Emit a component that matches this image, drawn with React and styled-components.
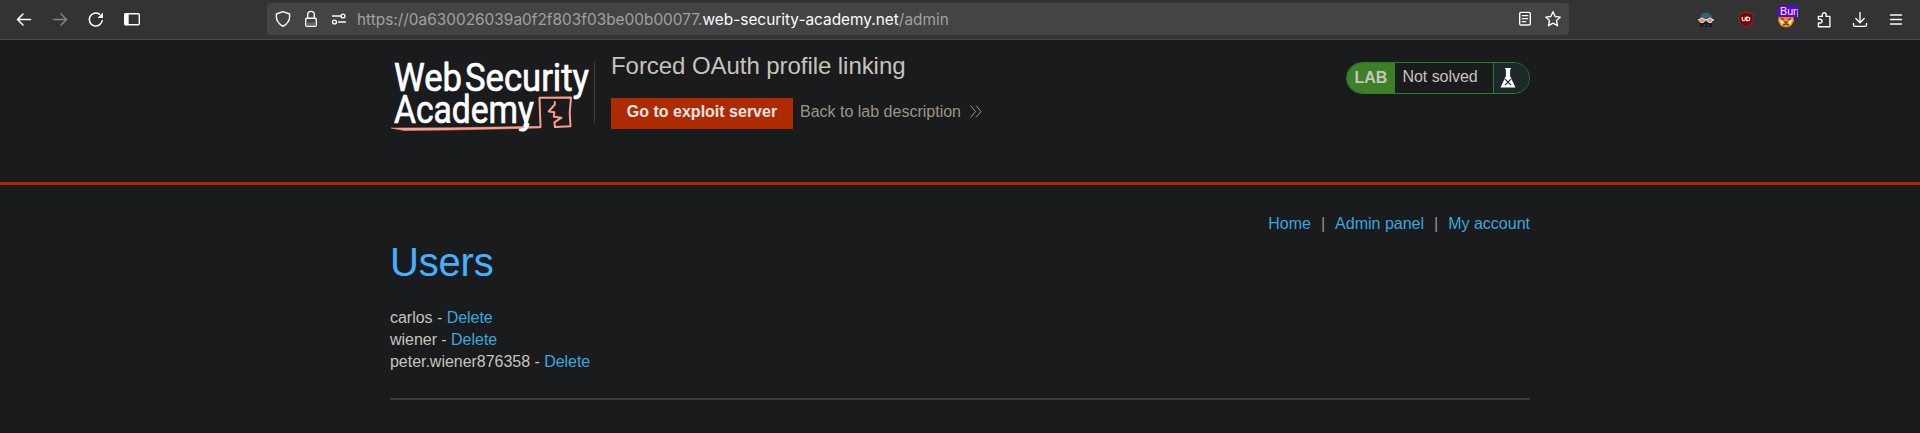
import React from "react";
import styled, { createGlobalStyle } from "styled-components";

const Global = createGlobalStyle`
  * { box-sizing: border-box; }
  body { margin: 0; background: #1a1b1d; }
`;

const Window = styled.div`
  height: 433px;
  overflow: hidden;
  display: flex;
  flex-direction: column;
  background: #1a1b1d;
  border-bottom: 2px solid #1b151c;
  color: #c8c3bc;
  font: 16px/22px "Liberation Sans", Arial, sans-serif;
`;

const Toolbar = styled.header`
  flex: none;
  height: 40px;
  display: flex;
  align-items: center;
  justify-content: space-between;
  background: #333;
  border-bottom: 1px solid #4b4b4b;
`;

const NavButtons = styled.div`
  flex: none;
  width: 267px;
  padding-left: 14px;
  display: flex;
  gap: 16px;
`;

const IconButton = styled.span`
  flex: none;
  width: 20px;
  height: 20px;
  color: ${(p) => (p.$dim ? "#828282" : "#fbfbfe")};
  svg { display: block; overflow: visible; }
`;

const AddressBar = styled.div`
  flex: none;
  width: 1302px;
  height: 32px;
  margin-top: -1px;
  padding: 0 6px;
  display: flex;
  align-items: center;
  border-radius: 4px;
  background: #444;
`;

const AddressIcons = styled.div`
  flex: none;
  display: flex;
  gap: 8px;
`;

const Url = styled.div`
  flex: 1;
  padding: 1px 0 0 8px;
  font: 15.4px/20px Inter, sans-serif;
  white-space: nowrap;
  color: #a0a0a0;
  b { font-weight: 400; color: #fbfbfe; }
`;

const Extensions = styled.div`
  flex: 1;
  padding-left: 127px;
  display: flex;
  gap: 20px;
`;

const BrowserActions = styled.div`
  flex: none;
  display: flex;
  gap: 16px;
  margin-left: -2px;
`;

const ExtensionWithBadge = styled(IconButton)`
  position: relative;
`;

const ExtensionBadge = styled.span`
  position: absolute;
  left: 2px;
  top: -4px;
  width: 20px;
  height: 11px;
  padding-left: 2px;
  overflow: hidden;
  border-radius: 2px 0 0 2px;
  background: #6000f0;
  color: #fff;
  font: 10.7px/11px "Liberation Sans", Arial, sans-serif;
  white-space: nowrap;
`;

const LabHeader = styled.section`
  flex: none;
  height: 145px;
  display: flex;
  justify-content: center;
  border-bottom: 3px solid #a72a05;
`;

const Container = styled.div`
  width: 1140px;
  margin: 0 auto;
`;

const HeaderRow = styled(Container)`
  display: flex;
  align-items: flex-start;
`;

const Logo = styled.svg`
  flex: none;
  width: 204px;
  height: 75px;
  margin-top: 22px;
  overflow: visible;
`;

const Divider = styled.span`
  width: 1px;
  height: 62px;
  margin-top: 22px;
  background: #3a3e41;
`;

const TitleBlock = styled.div`
  flex: 1;
  padding: 11px 0 0 16px;
`;

const LabTitle = styled.h2`
  margin: 0;
  font-size: 24px;
  line-height: 30px;
  font-weight: 400;
  letter-spacing: -0.06px;
`;

const Actions = styled.div`
  display: flex;
  align-items: center;
  margin-top: 17px;
`;

const ExploitButton = styled.a`
  width: 182px;
  height: 31px;
  line-height: 27px;
  text-align: center;
  font-weight: 700;
  background: #ae2b02;
  color: #e8e6e3;
`;

const BackLink = styled.a`
  height: 31px;
  line-height: 27px;
  padding-left: 7px;
  display: flex;
  color: #9d9488;
  svg { margin: 7px 0 0 9px; }
`;

const Status = styled.div`
  width: 184px;
  height: 32px;
  margin-top: 22px;
  display: flex;
  overflow: hidden;
  border: 1px solid #2b7d27;
  border-radius: 16px;
`;

const StatusLabel = styled.strong`
  width: 48px;
  padding-left: 7.5px;
  line-height: 29px;
  background: #3d8027;
`;

const StatusText = styled.span`
  width: 99px;
  padding-left: 7.5px;
  line-height: 28px;
  letter-spacing: -0.05px;
  border-right: 1px solid #2b7d27;
`;

const StatusIcon = styled.span`
  flex: 1;
  padding: 5px 0 0 6px;
  background: #1d282c;
  svg { display: block; }
`;

const PageLinks = styled.nav`
  display: flex;
  justify-content: flex-end;
  gap: 10px;
  padding-top: 28px;
  color: #9d9488;
`;

const Link = styled.a`
  color: #3aa6dd;
`;

const Heading = styled.h1`
  margin: 3px 0 0;
  font-size: 40px;
  line-height: 48px;
  font-weight: 400;
  letter-spacing: -0.2px;
  color: #46b0fe;
`;

const UserList = styled.section`
  margin-top: 21px;
`;

const UserRow = styled.div`
  height: 22px;
  letter-spacing: -0.03px;
`;

const Rule = styled.hr`
  height: 2px;
  margin: 25px 0 0;
  border: 0;
  background: #373c3e;
`;

const Icon = ({ children, dim }) => (
  <IconButton $dim={dim}>
    <svg width="20" height="20" viewBox="0 0 20 20" fill="none" stroke="currentColor" strokeWidth="1.4" strokeLinecap="round" strokeLinejoin="round">
      {children}
    </svg>
  </IconButton>
);

const WebSecurityLogo = () => (
  <Logo viewBox="0 0 204 75">
    <g fill="#fff" stroke="#fff" strokeWidth=".7" fontFamily="Roboto, sans-serif" fontWeight="400" fontSize="38">
      <text x="4" y="28.6" textLength="68" lengthAdjust="spacingAndGlyphs">Web</text>
      <text x="75" y="28.6" textLength="124" lengthAdjust="spacingAndGlyphs">Security</text>
      <text x="4" y="60.6" textLength="140" lengthAdjust="spacingAndGlyphs">Academy</text>
    </g>
    <g fill="none" stroke="#ff9d8a" strokeLinejoin="round" strokeLinecap="round">
      <path d="M150.5 65 149.5 35.7 181 35.5 179.7 51 180.5 64.3 165 65 164.4 60.3 171.5 55.7 163.8 54.7 164.3 50.3 158.7 49.5 164.8 42.5V40" strokeWidth="2" />
    </g>
    <path d="M1 66 60 65.8 150 64.3 150.5 66 60 68 14 68.5Z" fill="#ff9d8a" stroke="#ff9d8a" strokeWidth=".5" />
    <path d="m138 61-2 5q-1 2-4 2" fill="none" stroke="#fff" strokeWidth="3.6" />
  </Logo>
);

const users = ["carlos", "wiener", "peter.wiener876358"];

export default function App() {
  return (
    <Window>
      <Global />
      <Toolbar>
        <NavButtons>
          <Icon><path d="M16.5 9.5H3.5M9 4 3.5 9.5 9 15" strokeWidth="1.6" /></Icon>
          <Icon dim><path d="M3.5 9.5h13M11 4l5.5 5.5L11 15" strokeWidth="1.6" /></Icon>
          <Icon>
            <path d="M16.2 10.5A6.5 6.5 0 1 1 13.5 4.2" strokeWidth="1.6" />
            <path d="M17 2.5v5.5h-5.5Z" fill="currentColor" stroke="none" />
          </Icon>
          <Icon>
            <rect x="2.7" y="3.7" width="14.6" height="11" rx="1.3" />
            <path d="M3 4h3v10.5H3z" fill="currentColor" />
          </Icon>
        </NavButtons>
        <AddressBar>
          <AddressIcons>
            <Icon><path d="M10 2.6 16.6 5v3c0 4-2.6 7-6.6 9.3C6 15 3.4 12 3.4 8V5Z" /></Icon>
            <Icon>
              <rect x="4.7" y="9.3" width="10.6" height="7.9" rx="1.2" />
              <path d="M6.7 9V5.7a3.3 3.3 0 0 1 6.6 0V9" />
              <path d="M5.5 13.5h9v3h-9z" fill="#696969" stroke="none" />
            </Icon>
            <Icon>
              <path d="M3.5 7h8M9.5 13h7" />
              <circle cx="14" cy="7" r="1.9" /><circle cx="5.5" cy="13" r="1.9" />
            </Icon>
          </AddressIcons>
          <Url>https://0a630026039a0f2f803f03be00b00077.<b>web-security-academy.net</b>/admin</Url>
          <AddressIcons>
            <Icon>
              <rect x="4.7" y="3.4" width="10.6" height="12.6" rx="1.3" />
              <path d="M7.2 6.7h5.6M7.2 9.7h5.6M7.2 12.7h3.5" strokeWidth="1.2" />
            </Icon>
            <Icon><path d="m10 2.7 2.2 4.8 5.1.6-3.8 3.5 1 5.1-4.5-2.5-4.5 2.5 1-5.1L2.7 8.1l5.1-.6Z" /></Icon>
          </AddressIcons>
        </AddressBar>
        <Extensions>
          <IconButton>
            <svg width="20" height="20" viewBox="0 0 20 20">
              <path d="M4 9q0-6.5 6-6.5T16 9v8H4Z" fill="#2d6578" />
              <path d="M4 12h12v5H4Z" fill="#101d29" />
              <path d="M2 9.8h16" stroke="#e7d9cf" strokeWidth="1.5" />
              <circle cx="6" cy="10.4" r="2.3" fill="#f47b58" stroke="#f5ddd2" />
              <circle cx="14" cy="10.4" r="2.3" fill="#f47b58" stroke="#f5ddd2" />
              <path d="M7.5 15.2h1.5M11 15.2h1.5" stroke="#467689" />
            </svg>
          </IconButton>
          <IconButton>
            <svg width="20" height="20" viewBox="0 0 20 20">
              <path d="m10 2.2 7 2v5q0 5-7 8.3-7-3.3-7-8.3v-5Z" fill="#800000" stroke="#6e5555" strokeWidth=".6" />
              <path d="M6.3 7v2.2q0 1.5 1.5 1.5t1.5-1.5V7M10.8 7v3.7h1q1.9 0 1.9-1.8T11.8 7Z" fill="none" stroke="#fff" strokeWidth="1.2" />
            </svg>
          </IconButton>
          <ExtensionWithBadge>
            <svg width="20" height="20" viewBox="0 0 20 20">
              <path d="M3 5h14l1 6-3 5-5 1.5L5 16l-3-5Z" fill="#ee8b1b" />
              <path d="m3 9 5 3-2 3Zm14 0-5 3 2 3Z" fill="#fff1df" />
              <path d="m5 8 3 2m7-2-3 2m-3 2h2l-1 1.4ZM7 15l3-1 3 1" fill="none" stroke="#69401d" strokeWidth="1.2" />
            </svg>
            <ExtensionBadge>Burp</ExtensionBadge>
          </ExtensionWithBadge>
          <BrowserActions>
            <Icon><path d="M4.4 16.8V13h1.7a1.9 1.9 0 0 0 0-3.8H4.4V6.4h3.9V4.7a1.9 1.9 0 0 1 3.8 0v1.7h3.8v10.4Z" /></Icon>
            <Icon><path d="M10 2.5v10M5.8 8.5l4.2 4.2 4.2-4.2M3.5 13.5v1.3q0 1.6 1.6 1.6h9.8q1.6 0 1.6-1.6v-1.3" /></Icon>
            <Icon><path d="M4.5 5h11M4.5 9.5h11M4.5 14h11" /></Icon>
          </BrowserActions>
        </Extensions>
      </Toolbar>

      <LabHeader>
        <HeaderRow>
          <WebSecurityLogo />
          <Divider />
          <TitleBlock>
            <LabTitle>Forced OAuth profile linking</LabTitle>
            <Actions>
              <ExploitButton>Go to exploit server</ExploitButton>
              <BackLink>
                Back to lab description
                <svg width="12" height="13" viewBox="0 0 12 13" fill="none" stroke="currentColor">
                  <path d="m.5.5 5 6-5 6M6 .5l5 6-5 6" />
                </svg>
              </BackLink>
            </Actions>
          </TitleBlock>
          <Status>
            <StatusLabel>LAB</StatusLabel>
            <StatusText>Not solved</StatusText>
            <StatusIcon>
              <svg width="16" height="20" viewBox="0 0 16 20">
                <path d="M5 0h6v1.2h-.9V8L15.5 19.5H.5L5.9 8V1.2H5Z" fill="#fff" />
                <path d="m5 11.2 6 6m0-6-6 6" stroke="#1d282c" strokeWidth="1.2" />
              </svg>
            </StatusIcon>
          </Status>
        </HeaderRow>
      </LabHeader>

      <Container>
        <PageLinks>
          <Link>Home</Link><span>|</span><Link>Admin panel</Link><span>|</span><Link>My account</Link>
        </PageLinks>
        <Heading>Users</Heading>
        <UserList>
          {users.map((name) => (
            <UserRow key={name}>{name} - <Link>Delete</Link></UserRow>
          ))}
        </UserList>
        <Rule />
      </Container>
    </Window>
  );
}
